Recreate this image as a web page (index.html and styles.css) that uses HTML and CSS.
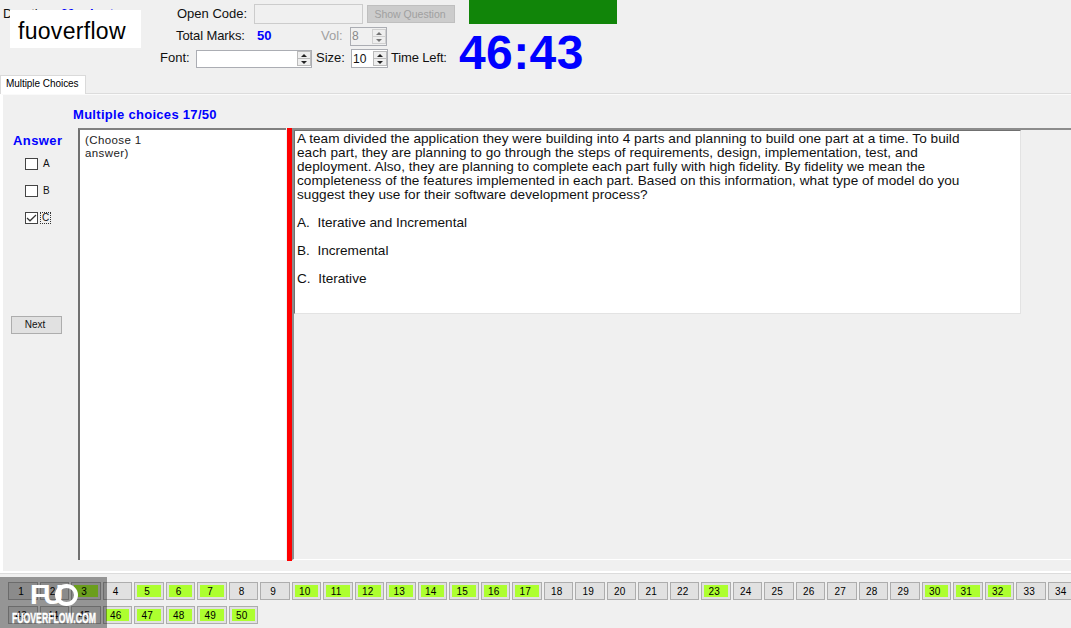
FILE: index.html
```html
<!DOCTYPE html>
<html lang="en">
<head>
    <meta charset="UTF-8">
    <meta name="viewport" content="width=device-width, initial-scale=1.0">
    <title>Multiple Choices</title>
    <link rel="stylesheet" href="styles.css">
</head>
<body>

    <!-- Exam header -->
    <div class="header">
        <div class="duration">
            <span>Duration:</span> <b>60 minutes</b>
            <div class="brand">fuoverflow</div>
        </div>
        <div class="controls">
            <div class="row row-code">
                <span class="label">Open Code:</span>
                <div class="code-input"></div>
                <div class="show-button">Show Question</div>
            </div>
            <div class="row row-marks">
                <span class="label">Total Marks:</span>
                <b class="marks">50</b>
                <span class="vol">Vol:</span>
                <div class="spin disabled"><span>8</span><i class="arrows"></i></div>
            </div>
            <div class="row row-font">
                <span class="label">Font:</span>
                <div class="spin font-name"><span></span><i class="arrows"></i></div>
                <span class="size-label">Size:</span>
                <div class="spin"><span>10</span><i class="arrows"></i></div>
                <span class="time-label">Time Left:</span>
            </div>
        </div>
        <div class="status">
            <div class="progress"></div>
            <div class="timer">46:43</div>
        </div>
    </div>

    <!-- Tab -->
    <div class="tabs">
        <div class="tab">Multiple Choices</div>
    </div>
    <div class="page">
        <div class="page-title">Multiple choices 17/50</div>
        <div class="content">
            <div class="answers">
                <div class="answers-title">Answer</div>
                <div class="option"><i class="box"></i><span>A</span></div>
                <div class="option"><i class="box"></i><span>B</span></div>
                <div class="option">
                    <i class="box"><svg viewBox="0 0 11 10"><path d="M1 5 L4 7.8 L10 2"/></svg></i><span class="focused">C</span>
                </div>
                <div class="next-button">Next</div>
            </div>
            <div class="hint">(Choose 1<br>answer)</div>
            <div class="splitter"></div>
            <div class="question-area">
                <div class="question">
                    <div>A team divided the application they were building into 4 parts and planning to build one part at a time. To build</div>
                    <div>each part, they are planning to go through the steps of requirements, design, implementation, test, and</div>
                    <div>deployment. Also, they are planning to complete each part fully with high fidelity. By fidelity we mean the</div>
                    <div>completeness of the features implemented in each part. Based on this information, what type of model do you</div>
                    <div>suggest they use for their software development process?</div>
                    <div class="choice">A.&nbsp; Iterative and Incremental</div>
                    <div class="choice">B.&nbsp; Incremental</div>
                    <div class="choice">C.&nbsp; Iterative</div>
                </div>
            </div>
        </div>
    </div>

    <!-- Question numbers -->
    <div class="numbers" id="numbers-1"></div>
    <div class="numbers" id="numbers-2"></div>
    <div class="finish"><i class="box"></i><span>I want to finish the exam.</span></div>

    <div class="watermark">
        <div class="watermark-logo">FU<i></i></div>
        <div class="watermark-site">FUOVERFLOW.COM</div>
    </div>

    <script>
        const answered = [3, 5, 6, 7, 10, 11, 12, 13, 14, 15, 16, 17, 23, 30, 31, 32, 46, 47, 48, 49, 50];

        function addNumbers(id, from, to) {
            const row = document.getElementById(id);
            for (let n = from; n <= to; n++) {
                const cell = document.createElement('div');
                cell.className = answered.includes(n) ? 'number done' : 'number';
                cell.innerHTML = `<span>${n}</span>`;
                row.appendChild(cell);
            }
        }

        addNumbers('numbers-1', 1, 34);
        addNumbers('numbers-2', 43, 50);
    </script>

</body>
</html>
```

FILE: styles.css
```css
* {
    box-sizing: border-box;
}

body {
    margin: 0;
    height: 628px;
    overflow: hidden;
    position: relative;
    background-color: #f0f0f0;
    font-family: "Liberation Sans", Arial, sans-serif;
    font-size: 13px;
    color: #111;
}

/* Header */
.header {
    display: flex;
    height: 75px;
    white-space: nowrap;
}

.duration {
    position: relative;
    width: 160px;
    padding: 6px 0 0 3px;
    line-height: 16px;
}

.duration b {
    margin-left: 1px;
    color: #0000ff;
}

.brand {
    position: absolute;
    left: 10px;
    top: 10px;
    width: 131px;
    height: 38px;
    padding-left: 8px;
    background-color: #fff;
    color: #000;
    font-size: 23px;
    letter-spacing: 0.3px;
    line-height: 43px;
}

.controls {
    width: 299px;
    padding-top: 3px;
}

.row {
    display: flex;
    align-items: center;
    height: 22px;
}

.row > span,
.row > b {
    padding-bottom: 2px;
}

.row-code {
    padding-left: 17px;
}

.row-code .label {
    width: 77px;
}

.row-marks {
    padding-left: 16px;
}

.row-marks .label {
    width: 81px;
    letter-spacing: -0.1px;
}

.row-font {
    height: 23px;
}

.row-font .label {
    width: 36px;
}

.code-input {
    width: 109px;
    height: 20px;
    margin-right: 4px;
    border: 1px solid #ccc;
}

.show-button {
    width: 88px;
    height: 18px;
    padding-right: 2px;
    border: 1px solid #bfbfbf;
    background-color: #ccc;
    color: #a0a0a0;
    font-size: 10.5px;
    line-height: 16px;
    text-align: center;
}

.marks {
    width: 64px;
    color: #0000ff;
}

.vol {
    width: 29px;
    color: #a0a0a0;
}

.spin {
    display: flex;
    justify-content: space-between;
    align-items: center;
    width: 37px;
    height: 19px;
    padding-left: 1px;
    border: 1px solid #abadb3;
    background-color: #fff;
    font-size: 12px;
}

.spin.disabled {
    background-color: #f0f0f0;
    color: #888;
}

.spin.font-name {
    width: 116px;
    height: 18px;
    margin-right: 4px;
}

.arrows {
    display: flex;
    flex-direction: column;
    justify-content: space-between;
    align-items: center;
    width: 14px;
    height: 15px;
    padding: 2px 0 1px;
    border: 1px solid #bbb;
    background: linear-gradient(#bbb, #bbb) center / 100% 1px no-repeat #eee;
}

.arrows::before,
.arrows::after {
    content: "";
    border: 3px solid transparent;
}

.arrows::before {
    border-top: 0;
    border-bottom: 3px solid #222;
}

.arrows::after {
    border-bottom: 0;
    border-top: 3px solid #222;
}

.disabled .arrows {
    opacity: 0.6;
}

.size-label {
    width: 35px;
}

.time-label {
    margin-left: 3px;
    letter-spacing: -0.15px;
}

.status {
    width: 160px;
}

.progress {
    width: 148px;
    height: 24px;
    margin-left: 10px;
    background-color: #118509;
}

.timer {
    color: #0000ff;
    font-size: 48px;
    font-weight: bold;
    line-height: 57px;
    letter-spacing: 0.4px;
}

/* Tab page */
.tabs {
    height: 19px;
    border-bottom: 1px solid #dcdcdc;
}

.tab {
    width: 86px;
    height: 19px;
    padding-left: 5px;
    border: 1px solid #dadada;
    border-bottom: 0;
    background-color: #fff;
    color: #000;
    font-size: 10px;
    line-height: 16px;
    letter-spacing: -0.05px;
    white-space: nowrap;
}

.page {
    height: 479px;
    border-top: 1px solid #fafafa;
    border-left: 3px solid #fff;
    border-bottom: 2px solid #fff;
    box-shadow: 0 1px 0 #dcdcdc;
}

.page-title {
    height: 33px;
    padding: 11px 0 0 70px;
    color: #0000ff;
    font-weight: bold;
    line-height: 18px;
    letter-spacing: 0.3px;
}

.content {
    display: flex;
    height: 433px;
}

.answers {
    width: 75px;
    padding-top: 4px;
}

.answers-title {
    height: 18px;
    padding-left: 10px;
    color: #0000ff;
    font-weight: bold;
    line-height: 18px;
    letter-spacing: 0.4px;
}

.option {
    display: flex;
    align-items: center;
    height: 27px;
    padding-left: 22px;
    font-size: 10px;
}

.box {
    flex: none;
    width: 13px;
    height: 12px;
    border: 1px solid #444;
    background-color: #fff;
}

.box svg {
    display: block;
    fill: none;
    stroke: #333;
    stroke-width: 1.2;
}

.option span {
    margin-left: 2px;
    padding: 0 2px;
    border: 1px solid transparent;
    line-height: 10px;
}

.option .focused {
    padding: 0 1px;
    border: 1px dotted #333;
}

.next-button {
    width: 51px;
    height: 18px;
    margin: 85px 0 0 8px;
    padding-right: 3px;
    border: 1px solid #adadad;
    background-color: #e1e1e1;
    font-size: 10px;
    line-height: 16px;
    text-align: center;
}

.hint {
    width: 208px;
    height: 432px;
    padding: 4px 0 0 5px;
    border-top: 2px solid #808080;
    border-left: 2px solid #707070;
    background-color: #fff;
    color: #222;
    font-size: 11.5px;
    line-height: 13px;
    letter-spacing: 0.4px;
}

.splitter {
    width: 5px;
    margin-left: 1px;
    background-color: #ff0000;
}

.question-area {
    flex: 1;
    height: 432px;
    border-top: 2px solid #8c8c8c;
    border-left: 2px solid #8c8c8c;
    border-bottom: 1px solid #fff;
}

.question {
    width: 727px;
    height: 184px;
    padding: 1px 0 0 2px;
    border-top: 1px solid #707070;
    border-left: 1px solid #707070;
    border-right: 1px solid #e3e3e3;
    border-bottom: 1px solid #e3e3e3;
    background-color: #fff;
    font-size: 13.6px;
    line-height: 14px;
    letter-spacing: 0.04px;
    white-space: nowrap;
}

.choice {
    margin-top: 14px;
    letter-spacing: 0;
}

/* Question numbers */
.numbers {
    display: flex;
    gap: 2px;
    height: 24px;
    padding-left: 8px;
}

#numbers-1 {
    margin-top: 9px;
}

.number {
    flex: none;
    width: 29.5px;
    height: 18px;
    padding: 2px;
    border: 1px solid #adadad;
    background-color: #e1e1e1;
    color: #000;
    font-size: 10px;
    line-height: 13px;
    letter-spacing: 0.3px;
    text-align: center;
}

.number span {
    display: block;
    height: 12px;
    padding-right: 3px;
}

.done span {
    background-color: #adff2f;
}

.finish {
    display: flex;
    gap: 4px;
    padding-left: 7px;
    font-size: 11px;
    line-height: 12px;
    white-space: nowrap;
}

.finish span {
    opacity: 0.6;
}

/* Watermark */
.watermark {
    position: absolute;
    left: 0;
    top: 577px;
    width: 107px;
    height: 51px;
    background-color: rgba(0, 0, 0, 0.38);
    color: #fff;
}

.watermark-logo {
    display: flex;
    align-items: center;
    height: 36px;
    padding-left: 30px;
    font-size: 28px;
    font-weight: bold;
    letter-spacing: -4px;
}

.watermark-logo i {
    width: 23px;
    height: 22px;
    margin-left: -4px;
    border: 4px solid #fff;
    border-radius: 50%;
}

.watermark-site {
    width: max-content;
    margin-left: 12px;
    font-size: 14px;
    font-weight: bold;
    line-height: 11px;
    transform: scaleX(0.62);
    transform-origin: left;
    -webkit-text-stroke: 0.4px #fff;
}
```
